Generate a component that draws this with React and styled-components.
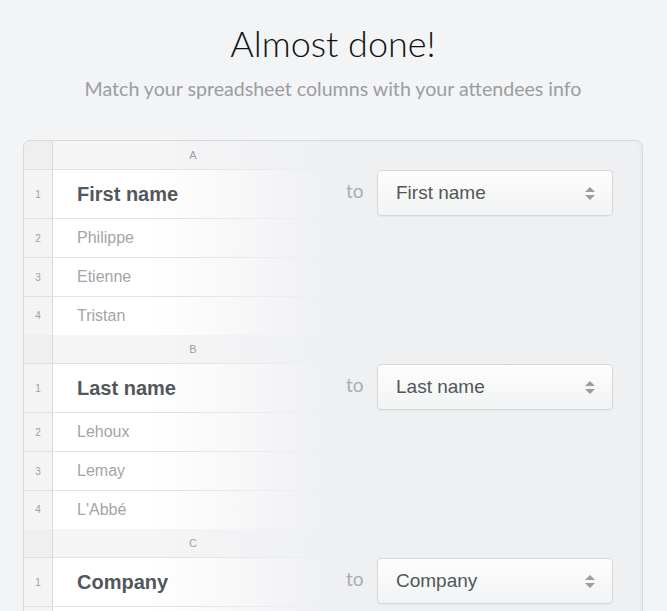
import React from 'react';
import styled, { createGlobalStyle } from 'styled-components';

const GlobalStyle = createGlobalStyle`
  html, body {
    margin: 0;
    background: #f3f4f6;
  }
  body {
    font-family: "Liberation Sans", Arial, sans-serif;
  }
`;

const Page = styled.div`
  padding: 22px 24px 0 23px;
  height: 611px;
  box-sizing: border-box;
  overflow: hidden;
`;

const Title = styled.h1`
  margin: 0;
  font-family: Lato, sans-serif;
  font-weight: 300;
  font-size: 36px;
  line-height: 43px;
  color: #111;
  text-align: center;
`;

const Subtitle = styled.p`
  margin: 12px 0 0;
  font-family: Lato, sans-serif;
  font-weight: 400;
  font-size: 19.6px;
  line-height: 24px;
  color: #9a9da2;
  text-align: center;
`;

const Card = styled.div`
  margin-top: 39px;
  border: 1px solid #d8d9dc;
  border-radius: 7px;
  background: #eff0f2;
  box-shadow: inset -2px 0 3px rgba(0, 0, 0, 0.03);
  overflow: hidden;
`;

const Block = styled.section`
  display: flex;
`;

const Sheet = styled.div`
  width: 309px;
  flex: none;
`;

const rowHeight = p => (p.$head ? 29 : p.$title ? 49 : p.$last ? 38 : 39);

const Row = styled.div`
  display: flex;
  height: ${rowHeight}px;
`;

const Num = styled.div`
  flex: none;
  box-sizing: border-box;
  width: 29px;
  border-right: 1px solid #d9dadc;
  border-bottom: 1px solid ${p => (p.$last ? 'transparent' : '#e0e1e3')};
  background: ${p => (p.$head ? '#efeff0' : '#f4f4f5')};
  display: flex;
  align-items: center;
  justify-content: center;
  font-size: 10px;
  color: #9c9fa4;
`;

const line = 'linear-gradient(to right, #e0e1e3 45%, rgba(224,225,227,0) 100%) left bottom / 100% 1px no-repeat';

const Cell = styled.div`
  flex: 1;
  box-sizing: border-box;
  padding-bottom: ${p => (p.$last ? 0 : 1)}px;
  display: flex;
  align-items: center;
  justify-content: ${p => (p.$head ? 'center' : 'flex-start')};
  padding-left: ${p => (p.$head ? 0 : 24)}px;
  background: ${p => (p.$last ? '' : line + ',')}
    ${p =>
      p.$head
        ? 'linear-gradient(to right, #f5f5f6 35%, rgba(245,245,246,0) 100%)'
        : 'linear-gradient(to right, #ffffff 35%, rgba(255,255,255,0) 98%)'};
  font-size: ${p => (p.$head ? 11 : p.$title ? 20 : 16)}px;
  font-weight: ${p => (p.$title ? 700 : 400)};
  color: ${p => (p.$title ? '#53575c' : p.$head ? '#9c9fa4' : '#a2a5aa')};
`;

const Mapping = styled.div`
  flex: 1;
  padding-top: 29px;
`;

const MapRow = styled.div`
  display: flex;
  align-items: center;
  height: 46px;
  padding-left: 13px;
`;

const To = styled.span`
  font-family: Lato, sans-serif;
  font-size: 19px;
  color: #a9acb0;
  width: 18px;
  margin-right: 13px;
  position: relative;
  top: -3px;
`;

const Select = styled.div`
  width: 236px;
  height: 46px;
  box-sizing: border-box;
  border: 1px solid #d6d7da;
  border-radius: 4px;
  background: linear-gradient(#fdfdfd, #f2f3f4);
  box-shadow: 0 1px 1px rgba(0, 0, 0, 0.04);
  display: flex;
  align-items: center;
  justify-content: space-between;
  padding: 0 17px 0 18px;
  font-size: 19px;
  color: #52565b;
`;

const Arrows = styled.span`
  display: flex;
  flex-direction: column;
  gap: 3px;
  &::before,
  &::after {
    content: '';
    width: 0;
    height: 0;
    border-left: 5px solid transparent;
    border-right: 5px solid transparent;
  }
  &::before {
    border-bottom: 5px solid #9a9da1;
  }
  &::after {
    border-top: 5px solid #9a9da1;
  }
`;

// Company rows lie below the fold: they are kept as blank rows
const columns = [
  { letter: 'A', title: 'First name', values: ['Philippe', 'Etienne', 'Tristan'] },
  { letter: 'B', title: 'Last name', values: ['Lehoux', 'Lemay', "L'Abbé"] },
  { letter: 'C', title: 'Company', values: [null, null, null] },
];

function ColumnBlock({ col }) {
  return (
    <Block>
      <Sheet>
        <Row $head>
          <Num $head />
          <Cell $head>{col.letter}</Cell>
        </Row>
        <Row $title>
          <Num>1</Num>
          <Cell $title>{col.title}</Cell>
        </Row>
        {col.values.map((v, i) => {
          const last = i === col.values.length - 1;
          return (
            <Row key={i} $last={last}>
              <Num $last={last}>{v === null ? '' : i + 2}</Num>
              <Cell $last={last}>{v}</Cell>
            </Row>
          );
        })}
      </Sheet>
      <Mapping>
        <MapRow>
          <To>to</To>
          <Select>
            {col.title}
            <Arrows />
          </Select>
        </MapRow>
      </Mapping>
    </Block>
  );
}

export default function App() {
  return (
    <>
      <GlobalStyle />
      <Page>
        <Title>Almost done!</Title>
        <Subtitle>Match your spreadsheet columns with your attendees info</Subtitle>
        <Card>
          {columns.map(c => (
            <ColumnBlock key={c.letter} col={c} />
          ))}
        </Card>
      </Page>
    </>
  );
}
